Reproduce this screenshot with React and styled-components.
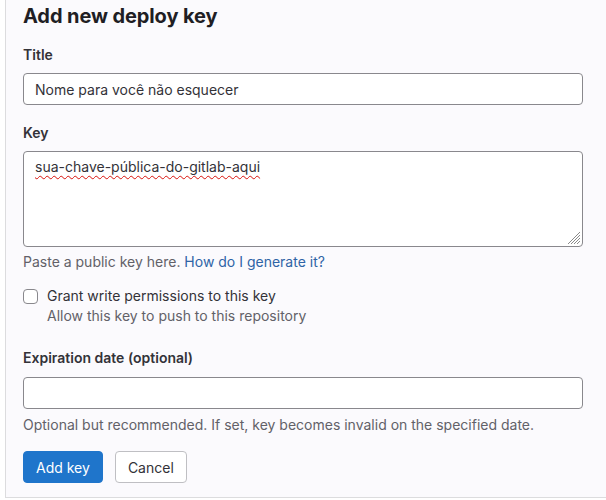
import React from "react";
import styled, { createGlobalStyle } from "styled-components";

const GlobalStyle = createGlobalStyle`
  html, body {
    margin: 0;
    padding: 0;
    background: #ffffff;
    overflow: hidden;
  }
  body {
    font-family: Inter, "Noto Sans", "Liberation Sans", sans-serif;
    color: #333238;
    font-size: 14px;
  }
  * { box-sizing: border-box; }
`;

const Panel = styled.section`
  margin-left: 5px;
  height: 498px;
  background: #fbfafd;
  border-left: 1px solid #dcdcde;
  border-bottom: 1px solid #dcdcde;
  padding: 4px 23px 0 17px;
`;

const Heading = styled.h2`
  margin: 0;
  font-size: 20px;
  line-height: 24px;
  font-weight: 700;
  color: #1f1e24;
  letter-spacing: -0.1px;
`;

const Group = styled.div`
  margin-top: ${(p) => p.$top}px;
  display: flex;
  flex-direction: column;
`;

const Label = styled.label`
  font-size: 14px;
  line-height: 20px;
  font-weight: 600;
  color: #333238;
  margin-bottom: ${(p) => p.$gap || 8}px;
`;

const TextInput = styled.input`
  height: 32px;
  width: 100%;
  border: 1px solid #89888d;
  border-radius: 4px;
  background: #ffffff;
  padding: 0 11px;
  font-family: inherit;
  font-size: 14px;
  color: #333238;
  outline: none;
`;

const KeyBox = styled.div`
  position: relative;
  height: 96px;
  width: 100%;
  border: 1px solid #89888d;
  border-radius: 4px;
  background: #ffffff;
  padding: 5px 11px;
  font-size: 14px;
  line-height: 20px;
  color: #333238;
`;

const Misspelled = styled.span`
  text-decoration: underline wavy #d9120b;
  text-decoration-thickness: 1.2px;
  text-underline-offset: 3px;
`;

const Grip = styled.svg`
  position: absolute;
  right: 1px;
  bottom: 1px;
`;

const Help = styled.p`
  margin: ${(p) => p.$top || 5}px 0 0;
  font-size: 14px;
  line-height: 20px;
  color: #626168;
`;

const HelpLink = styled.a`
  color: #2f64a6;
  text-decoration: none;
`;

const CheckRow = styled.div`
  margin-top: 14px;
  display: flex;
  align-items: flex-start;
  gap: 9px;
`;

const Box = styled.span`
  flex: none;
  width: 15px;
  height: 15px;
  margin-top: 3px;
  border: 1px solid #89888d;
  border-radius: 4px;
  background: #ffffff;
`;

const CheckText = styled.div`
  display: flex;
  flex-direction: column;
  line-height: 20px;
`;

const CheckTitle = styled.span`
  color: #333238;
`;

const CheckHint = styled.span`
  color: #626168;
`;

const Actions = styled.div`
  margin-top: 16px;
  display: flex;
  gap: 12px;
`;

const Button = styled.button`
  height: 32px;
  padding: 0 12px;
  border-radius: 4px;
  font-family: inherit;
  font-size: 14px;
  cursor: pointer;
  border: 1px solid ${(p) => (p.$primary ? "#1f75cb" : "#bfbfc3")};
  background: ${(p) => (p.$primary ? "#1f75cb" : "#ffffff")};
  color: ${(p) => (p.$primary ? "#ffffff" : "#333238")};
`;

export default function App() {
  return (
    <>
      <GlobalStyle />
      <Panel>
        <Heading>Add new deploy key</Heading>

        <Group $top={17}>
          <Label>Title</Label>
          <TextInput defaultValue="Nome para você não esquecer" />
        </Group>

        <Group $top={18}>
          <Label>Key</Label>
          <KeyBox>
            <Misspelled>sua-chave-pública-do-gitlab-aqui</Misspelled>
            <Grip width="14" height="14" viewBox="0 0 14 14">
              <g stroke="#8a8a8a" strokeWidth="1">
                <line x1="13" y1="1" x2="1" y2="13" />
                <line x1="13" y1="4" x2="4" y2="13" />
                <line x1="13" y1="7" x2="7" y2="13" />
                <line x1="13" y1="10" x2="10" y2="13" />
              </g>
            </Grip>
          </KeyBox>
          <Help>
            Paste a public key here.{" "}
            <HelpLink href="#">How do I generate it?</HelpLink>
          </Help>
        </Group>

        <CheckRow>
          <Box />
          <CheckText>
            <CheckTitle>Grant write permissions to this key</CheckTitle>
            <CheckHint>Allow this key to push to this repository</CheckHint>
          </CheckText>
        </CheckRow>

        <Group $top={22}>
          <Label $gap={9}>Expiration date (optional)</Label>
          <TextInput />
          <Help $top={6}>
            Optional but recommended. If set, key becomes invalid on the specified date.
          </Help>
        </Group>

        <Actions>
          <Button $primary>Add key</Button>
          <Button>Cancel</Button>
        </Actions>
      </Panel>
    </>
  );
}
